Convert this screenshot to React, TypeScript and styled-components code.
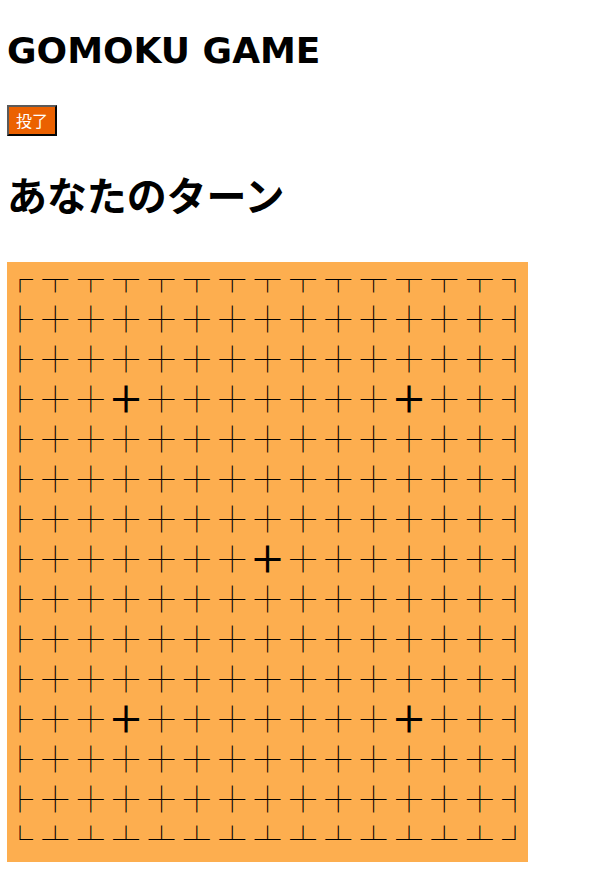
import React, { useState } from 'react'
import styled, { createGlobalStyle } from 'styled-components'

const GlobalStyle = createGlobalStyle`
  body {
    margin: 0;
    background: #fff;
    color: #000;
    font-family: "DejaVu Sans", "Noto Sans CJK JP", sans-serif;
  }
`

const Page = styled.div`
  display: flex;
  flex-direction: column;
  align-items: flex-start;
  padding: 29px 7px 0;
`

const Title = styled.h1`
  margin: 0;
  font-family: "DejaVu Sans", sans-serif;
  font-size: 36px;
  line-height: 43px;
  font-weight: 700;
`

const ResignButton = styled.button`
  box-sizing: border-box;
  width: 50px;
  height: 31px;
  margin-top: 33px;
  padding: 0;
  background: #eb6100;
  color: #fff;
  border: 2px outset #5a5a5a;
  font-family: "Noto Sans CJK JP", sans-serif;
  font-size: 16px;
  line-height: 27px;
  cursor: pointer;
`

const TurnHeading = styled.h2`
  margin: 38px 0 0;
  font-family: "Noto Sans CJK JP", sans-serif;
  font-size: 40px;
  line-height: 40px;
  font-weight: 700;
  letter-spacing: -0.1px;
`

const Board = styled.div`
  display: grid;
  grid-template-columns: repeat(15, 26px);
  grid-auto-rows: 40px;
  column-gap: 9.36px;
  margin-top: 48px;
  background: #fdae4f;
`

const Cell = styled.span<{ $star?: boolean }>`
  display: block;
  width: 26px;
  font-family: "Noto Sans CJK JP", sans-serif;
  font-size: 26px;
  line-height: 32px;
  color: #000;
  text-align: center;
  cursor: pointer;
`

const SIZE = 15
const STARS = ['3-3', '3-11', '7-7', '11-3', '11-11']

const glyphFor = (r: number, c: number) => {
  if (STARS.includes(`${r}-${c}`)) return '╋'
  const top = r === 0
  const bottom = r === SIZE - 1
  const left = c === 0
  const right = c === SIZE - 1
  if (top) return left ? '┌' : right ? '┐' : '┬'
  if (bottom) return left ? '└' : right ? '┘' : '┴'
  if (left) return '├'
  if (right) return '┤'
  return '┼'
}

const App = () => {
  const [turn] = useState('あなたのターン')

  const cells = []
  for (let r = 0; r < SIZE; r++) {
    for (let c = 0; c < SIZE; c++) {
      cells.push(
        <Cell key={`${r}-${c}`} $star={STARS.includes(`${r}-${c}`)}>
          {glyphFor(r, c)}
        </Cell>
      )
    }
  }

  return (
    <>
      <GlobalStyle />
      <Page>
        <Title>GOMOKU GAME</Title>
        <ResignButton>投了</ResignButton>
        <TurnHeading>{turn}</TurnHeading>
        <Board>{cells}</Board>
      </Page>
    </>
  )
}

export default App
